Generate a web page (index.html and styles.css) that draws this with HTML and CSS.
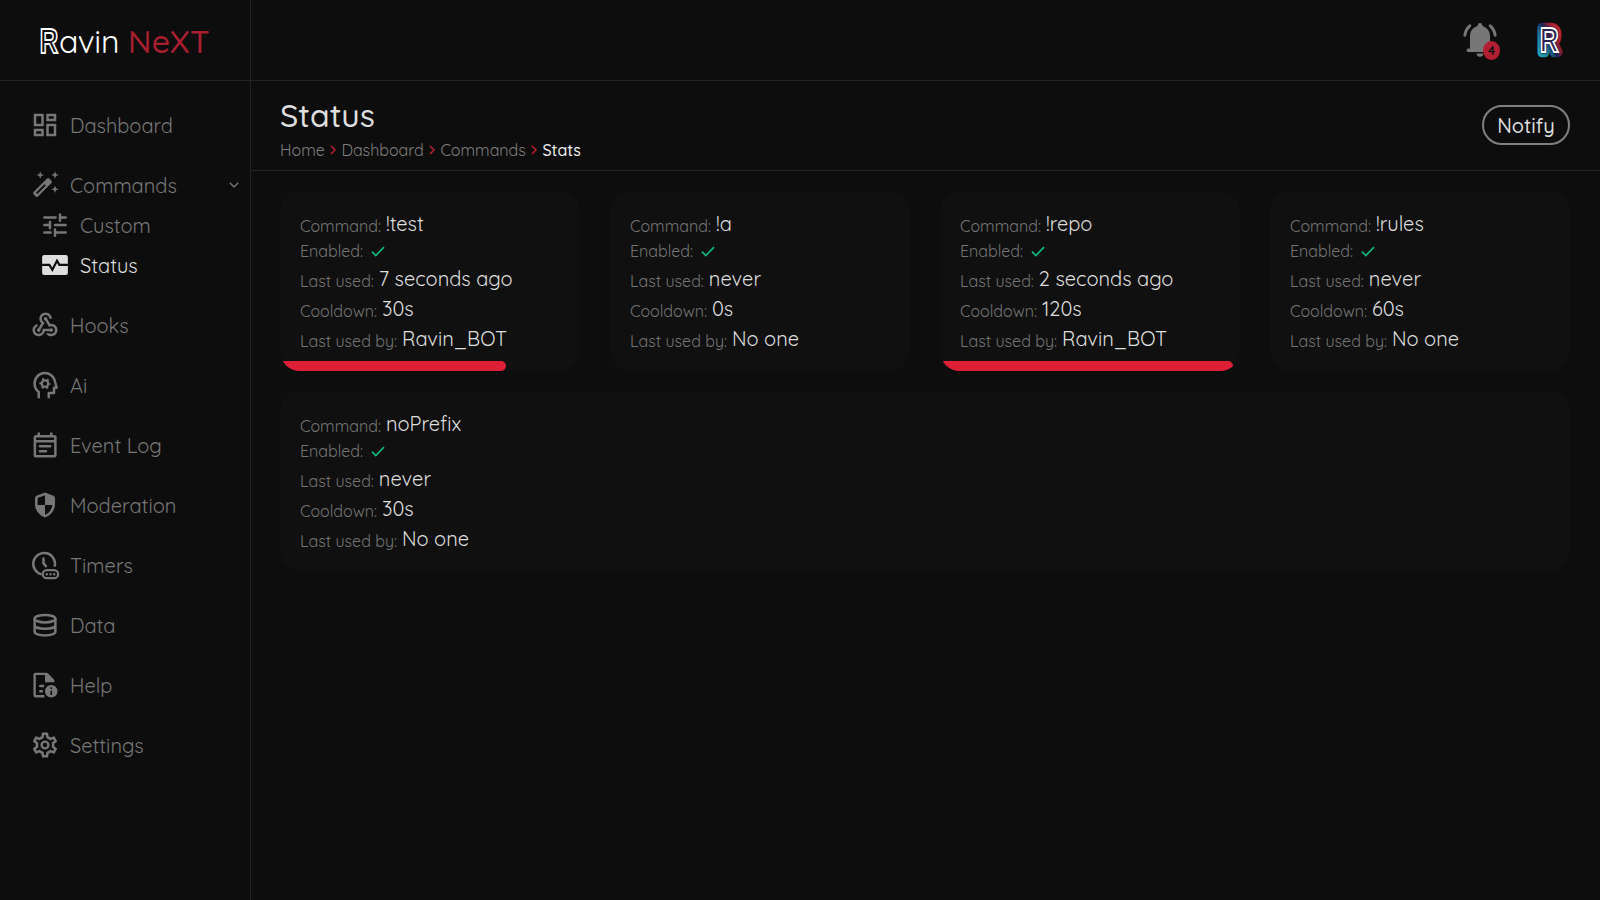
FILE: index.html
```
<!DOCTYPE html>
<html lang="en">
<head>
<meta charset="utf-8">
<title>Ravin NeXT</title>
<link rel="stylesheet" href="styles.css">
</head>
<body>
<div class="app">
  <aside class="sidebar">
    <div class="logo">
      <svg class="logo-mark" width="24" height="40" viewBox="0 0 24 40"><text class="mark-line" transform="translate(-.3 32.4) scale(.74 1)">R</text></svg>
      <span class="logo-name">avin</span><span class="logo-next">NeXT</span>
    </div>
    <nav class="nav">
      <a class="item"><svg viewBox="0 0 24 24" class="icon line"><rect x="4" y="4" width="6" height="8"/><rect x="14" y="4" width="6" height="4"/><rect x="4" y="16" width="6" height="4"/><rect x="14" y="12" width="6" height="8"/></svg><span>Dashboard</span></a>
      <div class="group">
        <a class="item"><svg viewBox="0 0 24 24" class="icon"><path fill-rule="evenodd" transform="translate(10 14) rotate(-45)" d="M-7.6-2.5H7.6Q8.8-2.5 8.8-1.3V1.3Q8.8 2.5 7.6 2.5H-7.6Q-8.8 2.5-8.8 1.3V-1.3Q-8.8-2.5-7.6-2.5ZM-6.6-.8V.8H3V-.8Z"/><path d="M8.2 1l.8 2.2 2.2.8-2.2.8L8.2 7l-.8-2.2L5.2 4l2.2-.8zM20 1l.8 2.2L23 4l-2.2.8L20 7l-.8-2.2L17 4l2.2-.8zM20 12.4l.8 2.2 2.2.8-2.2.8-.8 2.2-.8-2.2-2.2-.8 2.2-.8z"/></svg><span>Commands</span><svg class="caret" width="10" height="6" viewBox="0 0 10 6"><path d="M.8.8 5 4.900 9.200.8"/></svg></a>
        <a class="item sub"><svg viewBox="0 0 24 24" class="icon line round"><path d="M3.500 6H12.500M16 6H20.500M16 3.500V8.500M3.500 12H8M8 9.500V14.500M12 12H20.500M3.500 18H8.500M12 18H20.500M12 15.500V20.500"/></svg><span>Custom</span></a>
        <a class="item sub active"><svg viewBox="0 0 24 24" class="icon"><rect x="1.700" y="4" width="20.600" height="16" rx="1.700"/><path class="cut" d="M1.700 11.900H7.500L9.900 15.800 13.600 8.600 15.500 11.900H22.300"/></svg><span>Status</span></a>
      </div>
      <a class="item"><svg viewBox="0 0 24 24" class="icon"><path d="M10,15l5.880,0c0.270-0.310,0.670-0.500,1.120-0.500c0.830,0,1.500,0.670,1.500,1.500c0,0.830-0.670,1.500-1.500,1.500c-0.440,0-0.840-0.190-1.120-0.500l-3.980,0c-0.460,2.280-2.480,4-4.900,4c-2.760,0-5-2.240-5-5c0-2.420,1.720-4.440,4-4.900l0,2.070C4.840,13.580,4,14.700,4,16c0,1.650,1.350,3,3,3s3-1.350,3-3V15z M12.500,4c1.650,0,3,1.350,3,3h2c0-2.760-2.240-5-5-5c-2.760,0-5,2.240-5,5c0,1.430,0.600,2.710,1.550,3.620l-2.350,3.900C6.020,14.660,5.500,15.270,5.500,16c0,0.830,0.670,1.500,1.500,1.500s1.500-0.670,1.500-1.500c0-0.160-0.020-0.310-0.070-0.450l3.380-5.630C10.490,9.610,9.500,8.420,9.500,7C9.500,5.350,10.850,4,12.500,4z M17,13c-0.640,0-1.230,0.200-1.720,0.540l-3.050-5.070C11.530,8.350,11,7.740,11,7c0-0.830,0.670-1.500,1.500-1.500S14,6.170,14,7c0,0.150-0.020,0.290-0.060,0.430l2.190,3.650C16.410,11.030,16.700,11,17,11c2.760,0,5,2.240,5,5c0,2.760-2.240,5-5,5c-1.850,0-3.470-1.010-4.330-2.500l2.670,0C15.820,18.820,16.390,19,17,19c1.650,0,3-1.350,3-3S18.650,13,17,13z"/></svg><span>Hooks</span></a>
      <a class="item"><svg viewBox="0 0 24 24" class="icon line"><path stroke-linejoin="round" d="M7 22.500V17.600A8.300 8.300 0 0 1 3.700 11 8.200 8.200 0 0 1 20 9.400L21.300 14.200H19.200V18.400H15V22.500"/><circle cx="12" cy="10.900" r="2.600" stroke-width="1.900"/><circle cx="12" cy="10.900" r="3.900" stroke-width="1.300" stroke-dasharray="1.700 2.384" stroke-dashoffset=".85"/></svg><span>Ai</span></a>
      <a class="item"><svg viewBox="0 0 24 24" class="icon line"><rect x="3.900" y="5" width="16.400" height="16" rx="1"/><path d="M4 9H20M7 2V5M17 2V5"/><path stroke-linecap="round" d="M7.900 13H16.200M7.900 17H12.700"/></svg><span>Event Log</span></a>
      <a class="item"><svg viewBox="0 0 24 24" class="icon"><path fill-rule="evenodd" d="M12 2 5.200 4.500Q4 5 4 6.300V11.100C4 16.100 7.400 20.500 12 22 16.600 20.500 20 16.100 20 11.100V6.300Q20 5 18.800 4.500ZM12 4.200V12H6.100V6.300ZM12 12H17.900C17.300 15.800 15.100 18.900 12 19.900Z"/></svg><span>Moderation</span></a>
      <a class="item"><svg viewBox="0 0 24 24" class="icon line"><path d="M9.300 19.500A8.700 8.700 0 1 1 19.700 13.300"/><path stroke-linecap="round" d="M10.800 6.700V10.700L12.700 12.900"/><rect x="10.200" y="16.100" width="12.300" height="6.400" rx="3.200" stroke-width="1.800"/><path stroke-linecap="round" d="M13.400 19.300h.01M16.400 19.300h.01M19.400 19.300h.01"/></svg><span>Timers</span></a>
      <a class="item"><svg viewBox="0 0 24 24" class="icon line"><ellipse cx="12" cy="6.900" rx="8.300" ry="3"/><path d="M3.700 6.900V17.400C3.700 19 7.400 20.300 12 20.300S20.300 19 20.300 17.400V6.900M3.700 12.100C3.700 13.800 7.400 15 12 15S20.300 13.800 20.300 12.100"/></svg><span>Data</span></a>
      <a class="item"><svg viewBox="0 0 24 24" class="icon"><path class="stroke" stroke-linejoin="round" d="M11.500 21H4.500Q3.700 21 3.700 20.200V3.900Q3.700 3.100 4.500 3.100H13.300L18.600 8.500"/><path d="M12 2.500H13.800L19.500 8.200V9.700H12Z"/><path class="stroke" stroke-linecap="round" d="M8.200 12.800H10.500M8.200 17H9.500"/><circle cx="17" cy="17" r="5"/><path class="info" d="M17 16.500V20M17 13.800V15.200"/></svg><span>Help</span></a>
      <a class="item"><svg viewBox="0 0 24 24" class="icon"><path d="M19.430 12.980c.04-.32.07-.64.07-.98 0-.34-.03-.66-.07-.98l2.110-1.650c.19-.15.24-.42.12-.64l-2-3.460c-.09-.16-.26-.25-.44-.25-.06 0-.12.01-.17.03l-2.490 1c-.52-.4-1.080-.73-1.690-.98l-.38-2.650C14.460 2.180 14.250 2 14 2h-4c-.25 0-.46.18-.49.42l-.38 2.650c-.61.25-1.170.59-1.690.98l-2.490-1c-.06-.02-.12-.03-.18-.03-.17 0-.34.09-.43.25l-2 3.460c-.13.22-.07.49.12.64l2.110 1.650c-.04.32-.07.65-.07.98 0 .33.03.66.07.98l-2.110 1.650c-.19.15-.24.42-.12.64l2 3.460c.09.16.26.25.44.25.06 0 .12-.01.17-.03l2.490-1c.52.4 1.080.73 1.690.98l.38 2.650c.03.24.24.42.49.42h4c.25 0 .46-.18.49-.42l.38-2.650c.61-.25 1.170-.59 1.690-.98l2.490 1c.06.02.12.03.18.03.17 0 .34-.09.43-.25l2-3.460c.12-.22.07-.49-.12-.64l-2.110-1.650zm-1.980-1.710c.04.31.05.52.05.73 0 .21-.02.43-.05.73l-.14 1.130.89.7 1.080.84-.7 1.210-1.270-.51-1.040-.42-.9.68c-.43.32-.84.56-1.250.73l-1.060.43-.16 1.130-.2 1.350h-1.400l-.19-1.350-.16-1.130-1.060-.43c-.43-.18-.83-.41-1.230-.71l-.91-.7-1.060.43-1.270.51-.7-1.210 1.080-.84.89-.7-.14-1.130c-.03-.31-.05-.54-.05-.74s.02-.43.05-.73l.14-1.130-.89-.7-1.080-.84.7-1.210 1.270.51 1.040.42.9-.68c.43-.32.84-.56 1.250-.73l1.060-.43.16-1.130.2-1.350h1.390l.19 1.350.16 1.130 1.060.43c.43.18.83.41 1.230.71l.91.7 1.060-.43 1.270-.51.7 1.210-1.070.85-.89.7.14 1.130z"/><circle class="stroke" cx="12" cy="12" r="2.700"/></svg><span>Settings</span></a>
    </nav>
  </aside>

  <main class="main">
    <header class="topbar">
      <div class="bell">
        <svg width="40" height="40" viewBox="0 0 40 40"><path class="gray" d="M20 3a2.300 2.300 0 0 1 2.300 2.300v.7C27 7.200 30 11.200 30 16V28.500h1.800a1.700 1.700 0 0 1 0 3.400H8.200a1.700 1.700 0 0 1 0-3.400H10V16C10 11.200 13 7.200 17.700 6v-.7A2.300 2.300 0 0 1 20 3ZM16.700 33.500h6.600a3.300 3.300 0 0 1-6.600 0Z"/><path class="ring" d="M9.800 5.800Q5.500 9.500 4.900 15.200M30.200 5.800Q34.500 9.500 35.100 15.200"/></svg>
        <span class="badge">4</span>
      </div>
      <svg class="avatar" width="34" height="40" viewBox="0 0 34 40">
        <defs><linearGradient id="glow" x1="0" y1="1" x2="1" y2="0"><stop offset="0" stop-color="#24a6b4"/><stop offset=".28" stop-color="#1c7f97"/><stop offset=".5" stop-color="#1d2358"/><stop offset=".7" stop-color="#9c2038"/><stop offset="1" stop-color="#c32538"/></linearGradient></defs>
        <g transform="translate(7.800 32) scale(.76 1)"><text class="mark-glow">R</text><text class="mark-core">R</text><text class="mark-line">R</text></g>
      </svg>
    </header>

    <section class="pagehead">
      <div>
        <h1>Status</h1>
        <div class="crumbs"><span>Home</span><svg width="6" height="10" viewBox="0 0 6 10"><path d="M1 1 5 5 1 9"/></svg><span>Dashboard</span><svg width="6" height="10" viewBox="0 0 6 10"><path d="M1 1 5 5 1 9"/></svg><span>Commands</span><svg width="6" height="10" viewBox="0 0 6 10"><path d="M1 1 5 5 1 9"/></svg><span class="here">Stats</span></div>
      </div>
      <button class="notify">Notify</button>
    </section>

    <section class="cards">
      <article class="card">
        <div class="row"><span>Command:</span><b>!test</b></div>
        <div class="row short"><span>Enabled:</span><svg width="14" height="11" viewBox="0 0 14 11"><path d="M1 5.700 4.800 9.500 13 1.200"/></svg></div>
        <div class="row"><span>Last used:</span><b>7 seconds ago</b></div>
        <div class="row"><span>Cooldown:</span><b>30s</b></div>
        <div class="row"><span>Last used by:</span><b>Ravin_BOT</b></div>
        <div class="progress" style="width:75.400%"></div>
      </article>
      <article class="card">
        <div class="row"><span>Command:</span><b>!a</b></div>
        <div class="row short"><span>Enabled:</span><svg width="14" height="11" viewBox="0 0 14 11"><path d="M1 5.700 4.800 9.500 13 1.200"/></svg></div>
        <div class="row"><span>Last used:</span><b>never</b></div>
        <div class="row"><span>Cooldown:</span><b>0s</b></div>
        <div class="row"><span>Last used by:</span><b>No one</b></div>
      </article>
      <article class="card">
        <div class="row"><span>Command:</span><b>!repo</b></div>
        <div class="row short"><span>Enabled:</span><svg width="14" height="11" viewBox="0 0 14 11"><path d="M1 5.700 4.800 9.500 13 1.200"/></svg></div>
        <div class="row"><span>Last used:</span><b>2 seconds ago</b></div>
        <div class="row"><span>Cooldown:</span><b>120s</b></div>
        <div class="row"><span>Last used by:</span><b>Ravin_BOT</b></div>
        <div class="progress" style="width:97.800%"></div>
      </article>
      <article class="card">
        <div class="row"><span>Command:</span><b>!rules</b></div>
        <div class="row short"><span>Enabled:</span><svg width="14" height="11" viewBox="0 0 14 11"><path d="M1 5.700 4.800 9.500 13 1.200"/></svg></div>
        <div class="row"><span>Last used:</span><b>never</b></div>
        <div class="row"><span>Cooldown:</span><b>60s</b></div>
        <div class="row"><span>Last used by:</span><b>No one</b></div>
      </article>
      <article class="card wide">
        <div class="row"><span>Command:</span><b>noPrefix</b></div>
        <div class="row short"><span>Enabled:</span><svg width="14" height="11" viewBox="0 0 14 11"><path d="M1 5.700 4.800 9.500 13 1.200"/></svg></div>
        <div class="row"><span>Last used:</span><b>never</b></div>
        <div class="row"><span>Cooldown:</span><b>30s</b></div>
        <div class="row"><span>Last used by:</span><b>No one</b></div>
      </article>
    </section>
  </main>
</div>
</body>
</html>
```
FILE: styles.css
```
* { box-sizing: border-box; }
body { margin: 0; background: #0d0d0d; color: #dedede; font-family: Quicksand, Lato, sans-serif; }
svg { display: block; flex: none; overflow: visible; }
.app { display: flex; height: 900px; overflow: hidden; }

.sidebar { width: 251px; flex: none; border-right: 1px solid #232323; }
.logo { display: flex; height: 81px; padding: 1px 0 0 40px; align-items: center; border-bottom: 1px solid #232323; font-size: 32px; line-height: 40px; color: #fff; }
.logo-name { font-weight: 400; letter-spacing: -.3px; }
.logo-next { color: #a91f30; margin-left: 9px; font-weight: 500; letter-spacing: .2px; }
.logo-mark { margin-right: -5px; }
.mark-line, .mark-core, .mark-glow { font: bold 34.500px "Liberation Sans", sans-serif; }
.mark-line { fill: none; stroke: #fff; stroke-width: 1.900px; }

.nav { display: flex; flex-direction: column; gap: 20px; padding-top: 24px; }
.item { display: flex; align-items: center; gap: 10px; height: 40px; padding: 0 11px 0 30px; color: #777; font-size: 20px; font-weight: 400; }
.item span { padding-top: 1px; }
.sub { padding-left: 40px; }
.active { color: #dedede; }
.icon { width: 30px; height: 30px; fill: currentColor; }
.line { fill: none; stroke: currentColor; stroke-width: 2; }
.round { stroke-linecap: round; }
.stroke { fill: none; stroke: currentColor; stroke-width: 1.900; }
.cut { fill: none; stroke: #0d0d0d; stroke-width: 1.700; }
.info { fill: none; stroke: #0d0d0d; stroke-width: 1.300; }
.caret { margin-left: auto; fill: none; stroke: #777; stroke-width: 1.400; }

.main { flex: 1; min-width: 0; }
.topbar { display: flex; justify-content: flex-end; align-items: center; gap: 32px; height: 81px; padding-right: 34px; border-bottom: 1px solid #232323; }
.bell { position: relative; }
.gray { fill: #777; }
.ring { fill: none; stroke: #777; stroke-width: 3; stroke-linecap: round; }
.badge { position: absolute; right: 0; bottom: 0; width: 17px; height: 19px; border-radius: 50%; background: #b21f32; color: #111; font: 700 12px/19px Quicksand, Lato, sans-serif; text-align: center; }
.mark-glow { fill: none; stroke: url(#glow); stroke-width: 10.500px; stroke-linejoin: round; }
.mark-core { fill: #29234f; stroke: #29234f; stroke-width: 3px; stroke-linejoin: round; }

.pagehead { display: flex; justify-content: space-between; height: 90px; padding: 14px 30px 0 29px; border-bottom: 1px solid #232323; }
h1 { margin: 0 0 5px; font-size: 32px; line-height: 40px; font-weight: 500; }
.crumbs { display: flex; align-items: center; gap: 5.300px; color: #7d7d7d; font-size: 16px; line-height: 20px; font-weight: 400; }
.crumbs svg { fill: none; stroke: #b21f32; stroke-width: 1.600; }
.here { color: #f2f2f2; font-weight: 500; }
.notify { width: 88px; height: 40px; margin-top: 10px; padding: 1px 0 0; border: 2px solid #808080; border-radius: 20px; background: none; color: #dedede; font: 500 20px Quicksand, Lato, sans-serif; }

.cards { display: grid; grid-template-columns: repeat(4, 1fr); gap: 20px 30px; padding: 20px 30px 0 29px; }
.card { position: relative; height: 180px; padding: 17px 20px 0; border-radius: 20px; background: #101010; overflow: hidden; }
.wide { grid-column: 1 / -1; }
.row { display: flex; align-items: center; gap: 5px; height: 30px; white-space: nowrap; }
.row span { padding-top: 5px; color: #747474; font-size: 16px; font-weight: 400; }
.row b { padding-top: 1px; font-size: 20px; font-weight: 400; }
.short { height: 25px; }
.row.short span { padding-top: 0; }
.short svg { margin: 1px 0 0 3px; fill: none; stroke: #10b981; stroke-width: 1.700; }
.progress { position: absolute; left: 0; bottom: 0; height: 10px; border-radius: 5px; background: #dd2036; }
```
